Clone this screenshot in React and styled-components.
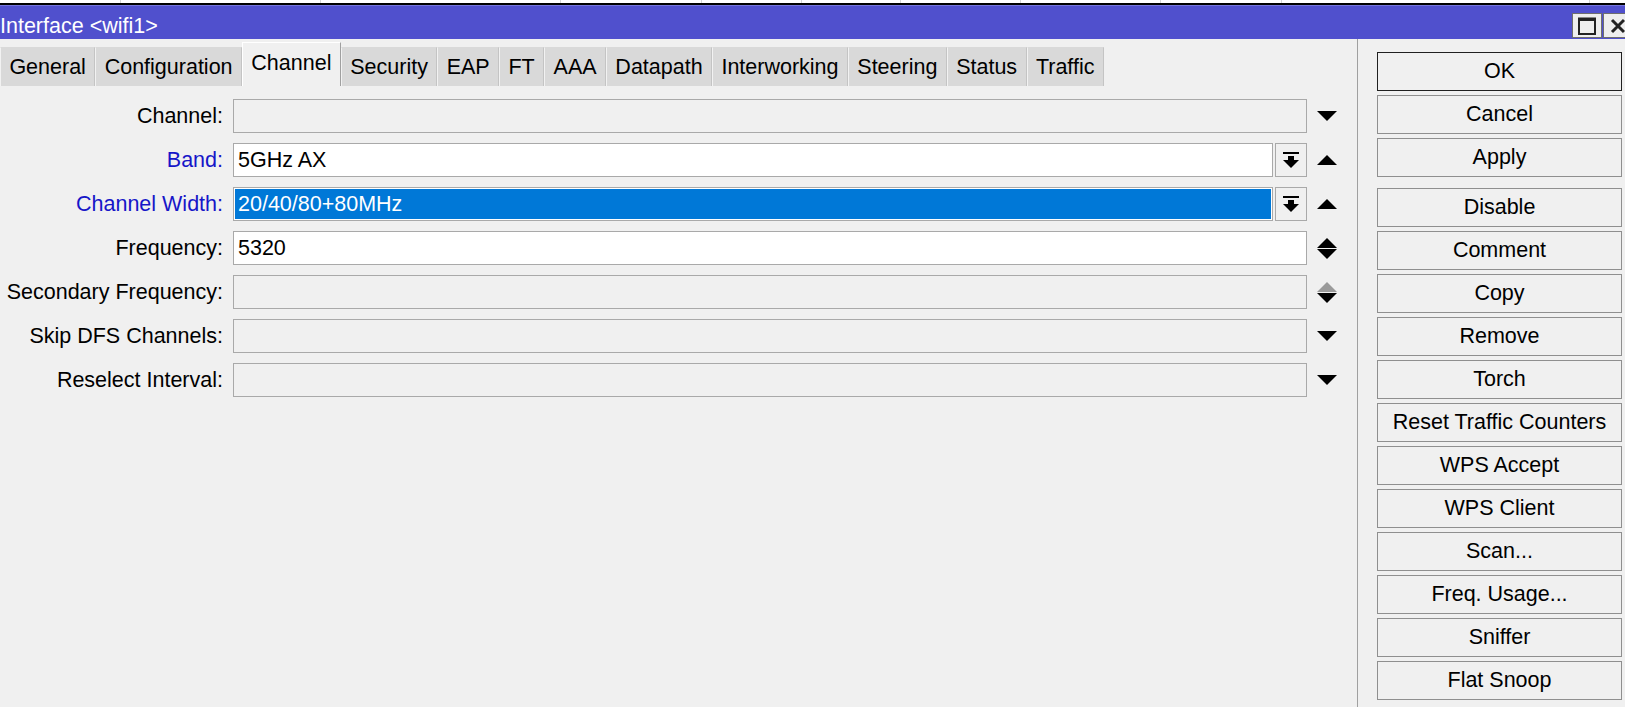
import React from "react";
import styled, { createGlobalStyle } from "styled-components";

const GlobalStyle = createGlobalStyle`
  html, body {
    margin: 0;
    padding: 0;
    background: #f0f0f0;
    overflow: hidden;
  }
  body {
    font-family: "Liberation Sans", Arial, sans-serif;
    font-size: 21.5px;
    color: #000;
  }
  * { box-sizing: border-box; }
`;

const Page = styled.div`
  width: 1625px;
  height: 707px;
  display: flex;
  flex-direction: column;
  overflow: hidden;
  background: #f0f0f0;
`;

const BackStrip = styled.div`
  height: 5px;
  flex: none;
  display: flex;
  background: #fff;
  border-bottom: 2px solid #000;
`;

const BackCell = styled.div`
  flex: none;
  width: ${(p) => p.$w}px;
  border-right: 1px solid #d4d4d4;
`;

const TitleBar = styled.div`
  height: 34px;
  flex: none;
  display: flex;
  align-items: center;
  justify-content: space-between;
  background: #5050cd;
  border-top: 1px solid #7575dc;
  margin-right: -8px;
  color: #fff;
  font-size: 21.5px;
`;

const TitleText = styled.span`
  white-space: nowrap;
  line-height: 1;
  padding-top: 9px;
`;

const WinButtons = styled.div`
  display: flex;
  gap: 1px;
  align-self: flex-end;
  margin-bottom: 1px;
`;

const WinButton = styled.div`
  width: 30px;
  height: 25px;
  background: #eeeeee;
  border: 1px solid #6e6e6e;
  display: flex;
  align-items: center;
  justify-content: center;
`;

const Body = styled.div`
  flex: 1;
  display: flex;
  min-height: 0;
`;

const Main = styled.div`
  flex: 1;
  display: flex;
  flex-direction: column;
  min-width: 0;
`;

const TabStrip = styled.div`
  height: 47px;
  flex: none;
  display: flex;
  align-items: flex-end;
`;

const Tab = styled.div`
  flex: none;
  display: flex;
  align-items: center;
  padding: 0 8.4px;
  white-space: nowrap;
  height: ${(p) => (p.$active ? "44px" : "39px")};
  background: ${(p) => (p.$active ? "#f0f0f0" : "#d9d9d9")};
  border-left: 1px solid ${(p) => (p.$active ? "#ffffff" : "#f2f2f2")};
  border-right: 1px solid ${(p) => (p.$active ? "#a0a0a0" : "#c4c4c4")};
  border-top: 1px solid ${(p) => (p.$active ? "#ffffff" : "#d9d9d9")};
  padding-bottom: ${(p) => (p.$active ? "3px" : "0")};
`;

const Form = styled.div`
  display: grid;
  grid-template-columns: 223px 1fr 40px;
  column-gap: 10px;
  row-gap: 10px;
  grid-auto-rows: 34px;
  padding-top: 13px;
`;

const Label = styled.div`
  display: flex;
  align-items: center;
  justify-content: flex-end;
  white-space: nowrap;
  color: ${(p) => (p.$blue ? "#1616c8" : "#000")};
`;

const FieldWrap = styled.div`
  display: flex;
  gap: 2px;
  min-width: 0;
`;

const Field = styled.div`
  flex: 1;
  min-width: 0;
  display: flex;
  align-items: center;
  padding: 0 4px;
  border: 1px solid #a9a9a9;
  white-space: nowrap;
  background: ${(p) => (p.$variant === "empty" ? "#f0f0f0" : "#ffffff")};
`;

const Selected = styled.span`
  display: flex;
  align-items: center;
  align-self: stretch;
  flex: 1;
  margin: 1px -3px;
  padding: 0 3px;
  background: #0078d7;
  color: #fff;
`;

const DropButton = styled.div`
  width: 32px;
  flex: none;
  border: 1px solid #a9a9a9;
  background: #f0f0f0;
  display: flex;
  align-items: center;
  justify-content: center;
`;

const ArrowCell = styled.div`
  display: flex;
  flex-direction: column;
  align-items: flex-start;
  justify-content: center;
  gap: 1px;
`;

const Side = styled.div`
  width: 268px;
  flex: none;
  border-left: 1px solid #a0a0a0;
  padding: 13px 3px 0 19px;
  display: flex;
  flex-direction: column;
  gap: 4px;
`;

const Button = styled.div`
  height: 39px;
  flex: none;
  display: flex;
  align-items: center;
  justify-content: center;
  background: #f0f0f0;
  border: 1px solid ${(p) => (p.$default ? "#202020" : "#8f8f8f")};
  white-space: nowrap;
  margin-top: ${(p) => (p.$groupStart ? "7px" : "0")};
`;

const Tri = ({ up, color = "#000" }) => (
  <svg width="20" height="10" viewBox="0 0 20 10">
    <polygon points={up ? "0,10 20,10 10,0" : "0,0 20,0 10,10"} fill={color} />
  </svg>
);

const DropIcon = () => (
  <svg width="16" height="16" viewBox="0 0 16 16">
    <rect x="0" y="0" width="16" height="2" fill="#000" />
    <rect x="5" y="4" width="6" height="4" fill="#000" />
    <polygon points="0,8 16,8 8,16" fill="#000" />
  </svg>
);

const MaxIcon = () => (
  <svg width="18" height="18" viewBox="0 0 18 18">
    <rect x="1" y="1.5" width="16" height="15.5" fill="none" stroke="#222" strokeWidth="2" />
    <rect x="1" y="1" width="16" height="3" fill="#222" />
  </svg>
);

const CloseIcon = () => (
  <svg width="16" height="16" viewBox="0 0 16 16">
    <path d="M2 2 L14 14 M14 2 L2 14" stroke="#222" strokeWidth="3" />
  </svg>
);

const tabs = [
  "General",
  "Configuration",
  "Channel",
  "Security",
  "EAP",
  "FT",
  "AAA",
  "Datapath",
  "Interworking",
  "Steering",
  "Status",
  "Traffic",
];

const rows = [
  { label: "Channel:", value: "", variant: "empty", arrow: "down" },
  { label: "Band:", blue: true, value: "5GHz AX", variant: "white", drop: true, arrow: "up" },
  { label: "Channel Width:", blue: true, value: "20/40/80+80MHz", variant: "selected", drop: true, arrow: "up" },
  { label: "Frequency:", value: "5320", variant: "white", arrow: "spin" },
  { label: "Secondary Frequency:", value: "", variant: "empty", arrow: "spinGray" },
  { label: "Skip DFS Channels:", value: "", variant: "empty", arrow: "down" },
  { label: "Reselect Interval:", value: "", variant: "empty", arrow: "down" },
];

const buttons = [
  { t: "OK", def: true },
  { t: "Cancel" },
  { t: "Apply" },
  { t: "Disable", group: true },
  { t: "Comment" },
  { t: "Copy" },
  { t: "Remove" },
  { t: "Torch" },
  { t: "Reset Traffic Counters" },
  { t: "WPS Accept" },
  { t: "WPS Client" },
  { t: "Scan..." },
  { t: "Freq. Usage..." },
  { t: "Sniffer" },
  { t: "Flat Snoop" },
];

const backCells = [121, 200, 240, 141, 100, 99, 120, 140, 121, 308];

function Arrow({ kind }) {
  if (kind === "down") return <Tri />;
  if (kind === "up") return <Tri up />;
  if (kind === "spin")
    return (
      <>
        <Tri up />
        <Tri />
      </>
    );
  return (
    <>
      <Tri up color="#9a9a9a" />
      <Tri />
    </>
  );
}

export default function App() {
  return (
    <>
      <GlobalStyle />
      <Page>
        <BackStrip>
          {backCells.map((w, i) => (
            <BackCell key={i} $w={w} />
          ))}
        </BackStrip>
        <TitleBar>
          <TitleText>Interface &lt;wifi1&gt;</TitleText>
          <WinButtons>
            <WinButton>
              <MaxIcon />
            </WinButton>
            <WinButton>
              <CloseIcon />
            </WinButton>
          </WinButtons>
        </TitleBar>
        <Body>
          <Main>
            <TabStrip>
              {tabs.map((t) => (
                <Tab key={t} $active={t === "Channel"}>
                  {t}
                </Tab>
              ))}
            </TabStrip>
            <Form>
              {rows.map((r) => (
                <React.Fragment key={r.label}>
                  <Label $blue={r.blue}>{r.label}</Label>
                  <FieldWrap>
                    <Field $variant={r.variant}>
                      {r.variant === "selected" ? <Selected>{r.value}</Selected> : r.value}
                    </Field>
                    {r.drop && (
                      <DropButton>
                        <DropIcon />
                      </DropButton>
                    )}
                  </FieldWrap>
                  <ArrowCell>
                    <Arrow kind={r.arrow} />
                  </ArrowCell>
                </React.Fragment>
              ))}
            </Form>
          </Main>
          <Side>
            {buttons.map((b) => (
              <Button key={b.t} $default={b.def} $groupStart={b.group}>
                {b.t}
              </Button>
            ))}
          </Side>
        </Body>
      </Page>
    </>
  );
}
